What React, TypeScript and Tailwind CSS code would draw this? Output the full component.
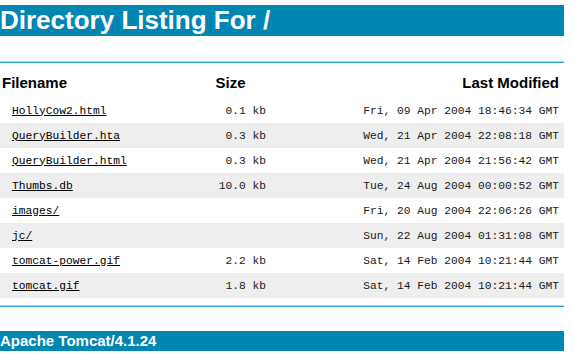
import React from "react";

const rows: { name: string; size: string; date: string }[] = [
  { name: "HollyCow2.html", size: "0.1 kb", date: "Fri, 09 Apr 2004 18:46:34 GMT" },
  { name: "QueryBuilder.hta", size: "0.3 kb", date: "Wed, 21 Apr 2004 22:08:18 GMT" },
  { name: "QueryBuilder.html", size: "0.3 kb", date: "Wed, 21 Apr 2004 21:56:42 GMT" },
  { name: "Thumbs.db", size: "10.0 kb", date: "Tue, 24 Aug 2004 00:00:52 GMT" },
  { name: "images/", size: "", date: "Fri, 20 Aug 2004 22:06:26 GMT" },
  { name: "jc/", size: "", date: "Sun, 22 Aug 2004 01:31:08 GMT" },
  { name: "tomcat-power.gif", size: "2.2 kb", date: "Sat, 14 Feb 2004 10:21:44 GMT" },
  { name: "tomcat.gif", size: "1.8 kb", date: "Sat, 14 Feb 2004 10:21:44 GMT" },
];

function Rule() {
  return (
    <div className="w-full">
      <div className="h-px bg-[#a9d8ec]" />
      <div className="h-px bg-[#2ea4d3]" />
    </div>
  );
}

export default function App() {
  return (
    <div className="w-[574px] h-[353px] bg-white overflow-hidden font-['Liberation_Sans',Arial,sans-serif] text-black">
      <div className="w-[564px] pt-[5px]">
        <h1 className="h-[31px] bg-[#0086b2] text-white font-bold text-[26px] leading-[31px] whitespace-nowrap">
          Directory Listing For /
        </h1>
        <div className="mt-[25px]">
          <Rule />
        </div>
        <div className="mt-[7px] grid grid-cols-[190px_81px_1fr] h-[26px] items-center font-bold text-[15px]">
          <div className="pl-[2px]">Filename</div>
          <div className="text-center">Size</div>
          <div className="text-right pr-[5px]">Last Modified</div>
        </div>
        <div className="mt-[2px] font-['Liberation_Mono','Courier_New',monospace] text-[11.25px] text-[#1a1a1a]">
          {rows.map((r, i) => (
            <div
              key={r.name}
              className={`grid grid-cols-[190px_81px_1fr] h-[25px] items-center pt-[1px] ${i % 2 === 1 ? "bg-[#eeeeee]" : "bg-white"}`}
            >
              <div className="pl-[12px] whitespace-nowrap">
                <a href="#" className="underline text-black">
                  {r.name}
                </a>
              </div>
              <div className="text-right pr-[5px] whitespace-nowrap">{r.size}</div>
              <div className="text-right pr-[5px] whitespace-nowrap">{r.date}</div>
            </div>
          ))}
        </div>
        <div className="mt-[7px]">
          <Rule />
        </div>
        <h3 className="mt-[24px] h-[20px] bg-[#0086b2] text-white font-bold text-[15px] leading-[20px] whitespace-nowrap">
          Apache Tomcat/4.1.24
        </h3>
      </div>
    </div>
  );
}
